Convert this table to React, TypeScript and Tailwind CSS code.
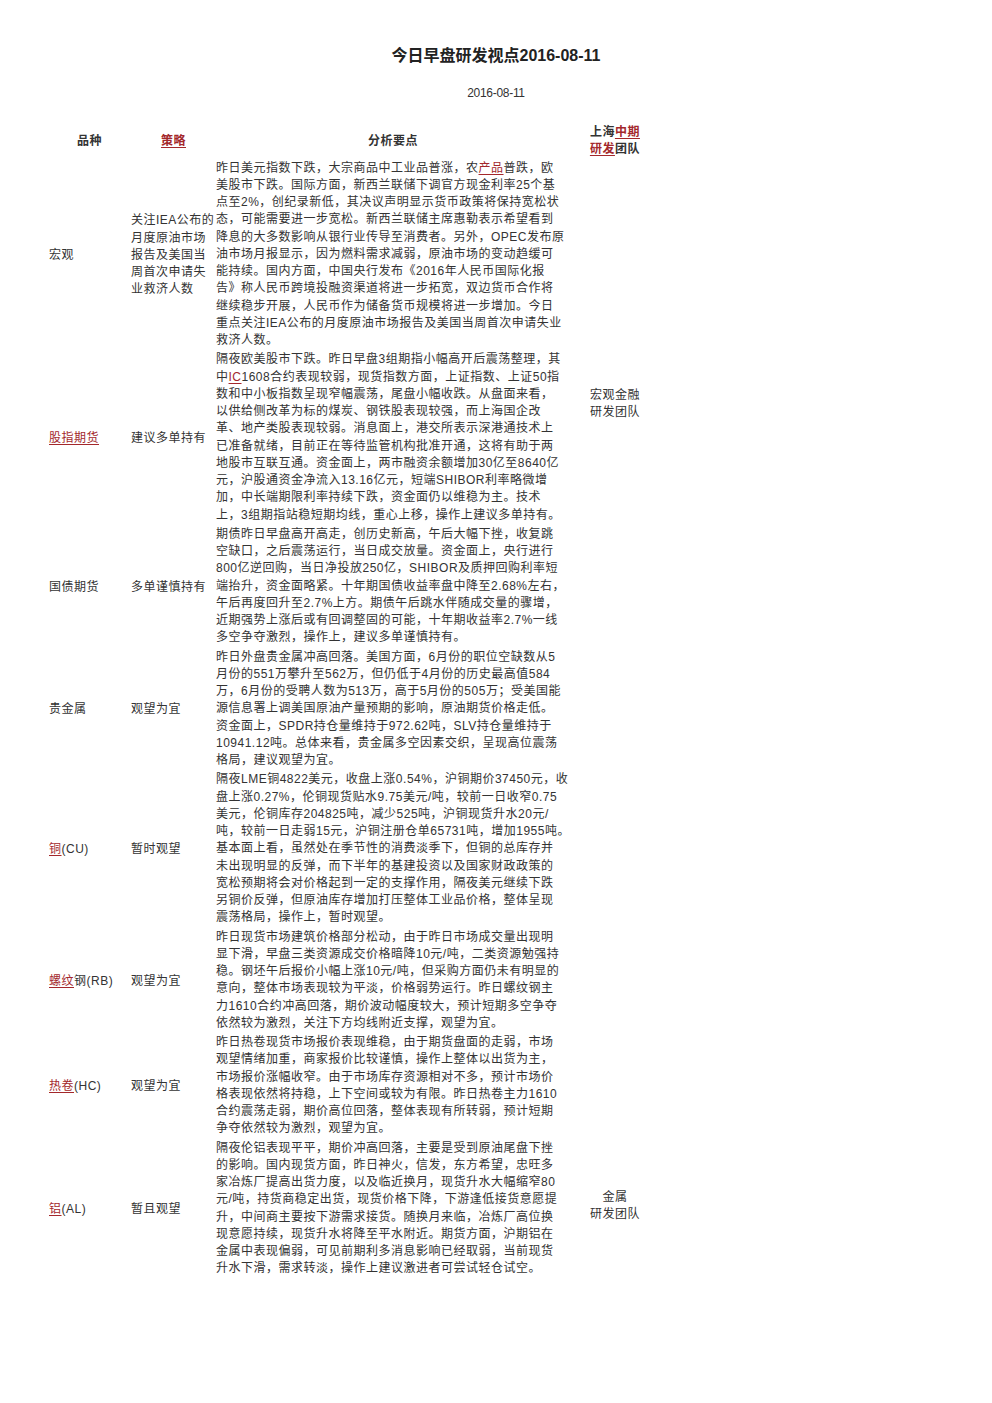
import React from "react";

const font = "font-['Liberation_Sans','Noto_Sans_CJK_SC',sans-serif]";

// text inside [brackets] is rendered as a red underlined link
function Linked({ text }: { text: string }) {
  const parts = text.split(/(\[[^\]]+\])/);
  return (
    <>
      {parts.map((p, i) =>
        p.startsWith("[") ? (
          <span key={i} className="text-[#a3282c] underline underline-offset-2">
            {p.slice(1, -1)}
          </span>
        ) : (
          <React.Fragment key={i}>{p}</React.Fragment>
        )
      )}
    </>
  );
}

type Row = {
  name: string;
  strategy: string[];
  lines: string[];
  team?: { span: number; lines: string[]; bottom?: boolean };
};

const rows: Row[] = [
  {
    name: "宏观",
    strategy: ["关注IEA公布的", "月度原油市场", "报告及美国当", "周首次申请失", "业救济人数"],
    team: { span: 3, lines: ["宏观金融", "研发团队"] },
    lines: [
      "昨日美元指数下跌，大宗商品中工业品普涨，农[产品]普跌，欧",
      "美股市下跌。国际方面，新西兰联储下调官方现金利率25个基",
      "点至2%，创纪录新低，其决议声明显示货币政策将保持宽松状",
      "态，可能需要进一步宽松。新西兰联储主席惠勒表示希望看到",
      "降息的大多数影响从银行业传导至消费者。另外，OPEC发布原",
      "油市场月报显示，因为燃料需求减弱，原油市场的变动趋缓可",
      "能持续。国内方面，中国央行发布《2016年人民币国际化报",
      "告》称人民币跨境投融资渠道将进一步拓宽，双边货币合作将",
      "继续稳步开展，人民币作为储备货币规模将进一步增加。今日",
      "重点关注IEA公布的月度原油市场报告及美国当周首次申请失业",
      "救济人数。",
    ],
  },
  {
    name: "[股指期货]",
    strategy: ["建议多单持有"],
    lines: [
      "隔夜欧美股市下跌。昨日早盘3组期指小幅高开后震荡整理，其",
      "中[IC]1608合约表现较弱，现货指数方面，上证指数、上证50指",
      "数和中小板指数呈现窄幅震荡，尾盘小幅收跌。从盘面来看，",
      "以供给侧改革为标的煤炭、钢铁股表现较强，而上海国企改",
      "革、地产类股表现较弱。消息面上，港交所表示深港通技术上",
      "已准备就绪，目前正在等待监管机构批准开通，这将有助于两",
      "地股市互联互通。资金面上，两市融资余额增加30亿至8640亿",
      "元，沪股通资金净流入13.16亿元，短端SHIBOR利率略微增",
      "加，中长端期限利率持续下跌，资金面仍以维稳为主。技术",
      "上，3组期指站稳短期均线，重心上移，操作上建议多单持有。",
    ],
  },
  {
    name: "国债期货",
    strategy: ["多单谨慎持有"],
    lines: [
      "期债昨日早盘高开高走，创历史新高，午后大幅下挫，收复跳",
      "空缺口，之后震荡运行，当日成交放量。资金面上，央行进行",
      "800亿逆回购，当日净投放250亿，SHIBOR及质押回购利率短",
      "端抬升，资金面略紧。十年期国债收益率盘中降至2.68%左右，",
      "午后再度回升至2.7%上方。期债午后跳水伴随成交量的骤增，",
      "近期强势上涨后或有回调整固的可能，十年期收益率2.7%一线",
      "多空争夺激烈，操作上，建议多单谨慎持有。",
    ],
  },
  {
    name: "贵金属",
    strategy: ["观望为宜"],
    team: { span: 5, lines: ["金属", "研发团队"], bottom: true },
    lines: [
      "昨日外盘贵金属冲高回落。美国方面，6月份的职位空缺数从5",
      "月份的551万攀升至562万，但仍低于4月份的历史最高值584",
      "万，6月份的受聘人数为513万，高于5月份的505万；受美国能",
      "源信息署上调美国原油产量预期的影响，原油期货价格走低。",
      "资金面上，SPDR持仓量维持于972.62吨，SLV持仓量维持于",
      "10941.12吨。总体来看，贵金属多空因素交织，呈现高位震荡",
      "格局，建议观望为宜。",
    ],
  },
  {
    name: "[铜](CU)",
    strategy: ["暂时观望"],
    lines: [
      "隔夜LME铜4822美元，收盘上涨0.54%，沪铜期价37450元，收",
      "盘上涨0.27%，伦铜现货贴水9.75美元/吨，较前一日收窄0.75",
      "美元，伦铜库存204825吨，减少525吨，沪铜现货升水20元/",
      "吨，较前一日走弱15元，沪铜注册仓单65731吨，增加1955吨。",
      "基本面上看，虽然处在季节性的消费淡季下，但铜的总库存并",
      "未出现明显的反弹，而下半年的基建投资以及国家财政政策的",
      "宽松预期将会对价格起到一定的支撑作用，隔夜美元继续下跌",
      "另铜价反弹，但原油库存增加打压整体工业品价格，整体呈现",
      "震荡格局，操作上，暂时观望。",
    ],
  },
  {
    name: "[螺纹]钢(RB)",
    strategy: ["观望为宜"],
    lines: [
      "昨日现货市场建筑价格部分松动，由于昨日市场成交量出现明",
      "显下滑，早盘三类资源成交价格暗降10元/吨，二类资源勉强持",
      "稳。钢坯午后报价小幅上涨10元/吨，但采购方面仍未有明显的",
      "意向，整体市场表现较为平淡，价格弱势运行。昨日螺纹钢主",
      "力1610合约冲高回落，期价波动幅度较大，预计短期多空争夺",
      "依然较为激烈，关注下方均线附近支撑，观望为宜。",
    ],
  },
  {
    name: "[热卷](HC)",
    strategy: ["观望为宜"],
    lines: [
      "昨日热卷现货市场报价表现维稳，由于期货盘面的走弱，市场",
      "观望情绪加重，商家报价比较谨慎，操作上整体以出货为主，",
      "市场报价涨幅收窄。由于市场库存资源相对不多，预计市场价",
      "格表现依然将持稳，上下空间或较为有限。昨日热卷主力1610",
      "合约震荡走弱，期价高位回落，整体表现有所转弱，预计短期",
      "争夺依然较为激烈，观望为宜。",
    ],
  },
  {
    name: "[铝](AL)",
    strategy: ["暂且观望"],
    lines: [
      "隔夜伦铝表现平平，期价冲高回落，主要是受到原油尾盘下挫",
      "的影响。国内现货方面，昨日神火，信发，东方希望，忠旺多",
      "家冶炼厂提高出货力度，以及临近换月，现货升水大幅缩窄80",
      "元/吨，持货商稳定出货，现货价格下降，下游逢低接货意愿提",
      "升，中间商主要按下游需求接货。随换月来临，冶炼厂高位换",
      "现意愿持续，现货升水将降至平水附近。期货方面，沪期铝在",
      "金属中表现偏弱，可见前期利多消息影响已经取弱，当前现货",
      "升水下滑，需求转淡，操作上建议激进者可尝试轻仓试空。",
    ],
  },
];

export default function App() {
  return (
    <div className={`w-[992px] min-h-[1403px] bg-white text-[#333] ${font}`}>
      <h1 className="pt-[46px] text-center text-[16px] leading-[20px] font-bold text-[#222]">
        今日早盘研发视点2016-08-11
      </h1>
      <p className="mt-[19px] text-center text-[12px] leading-[17px] tracking-[-0.3px]">
        2016-08-11
      </p>

      <table className="mt-[22px] ml-[48px] table-fixed border-collapse text-[12px] leading-[17.25px] tracking-[0.5px]">
        <colgroup>
          <col className="w-[83px]" />
          <col className="w-[85px]" />
          <col className="w-[350px]" />
          <col className="w-[90px]" />
        </colgroup>
        <thead>
          <tr className="font-bold">
            <th className="p-0 pb-px text-center align-middle">品种</th>
            <th className="p-0 pb-px text-center align-middle">
              <Linked text="[策略]" />
            </th>
            <th className="p-0 pb-px text-center align-middle">分析要点</th>
            <th className="p-0 pb-px text-center align-middle">
              上海<Linked text="[中期]" />
              <br />
              <Linked text="[研发]" />团队
            </th>
          </tr>
        </thead>
        <tbody>
          {rows.map((r, i) => (
            <tr key={i}>
              <td className="p-0 pl-px align-middle whitespace-nowrap">
                <Linked text={r.name} />
              </td>
              <td className="p-0 align-middle whitespace-nowrap">
                {r.strategy.map((s, j) => (
                  <div key={j}>{s}</div>
                ))}
              </td>
              <td className="p-0 pb-[2px] align-middle whitespace-nowrap">
                {r.lines.map((l, j) => (
                  <div key={j}>
                    <Linked text={l} />
                  </div>
                ))}
              </td>
              {r.team && (
                <td
                  rowSpan={r.team.span}
                  className={
                    r.team.bottom
                      ? "p-0 pb-[56px] text-center align-bottom"
                      : "p-0 text-center align-middle"
                  }
                >
                  {r.team.lines.map((t, j) => (
                    <div key={j}>{t}</div>
                  ))}
                </td>
              )}
            </tr>
          ))}
        </tbody>
      </table>
    </div>
  );
}
